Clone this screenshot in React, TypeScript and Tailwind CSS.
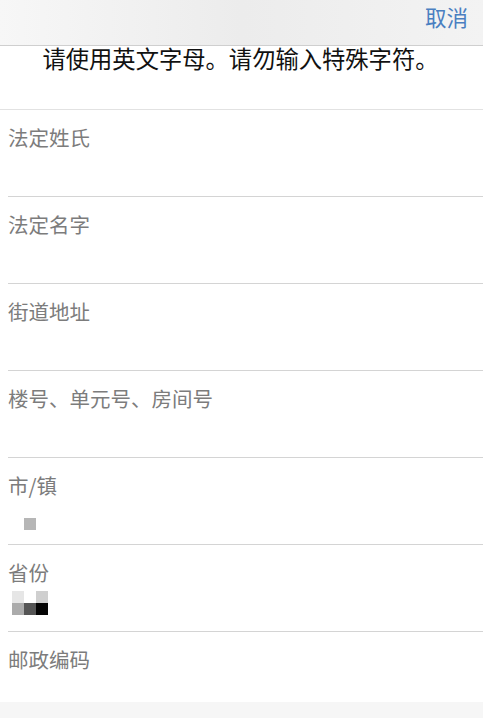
import React from "react";

const labels = ["法定姓氏", "法定名字", "街道地址", "楼号、单元号、房间号", "市/镇", "省份"];

function Px({ c }: { c: string }) {
  return <div className={`w-[12px] h-[12px] ${c}`} />;
}

export default function App() {
  return (
    <div className="w-[483px] h-[718px] overflow-hidden bg-white flex flex-col" style={{ fontFamily: '"Noto Sans CJK SC", "Noto Sans", sans-serif' }}>
      <div className="h-[46px] shrink-0 flex items-center justify-end pr-[15px] border-b border-[#cfcfcf] bg-gradient-to-r from-[#f7f7f7] via-[#ececec] to-[#f3f3f3]">
        <span className="text-[21.5px] leading-none text-[#4a7fc1] -mt-[12px]">取消</span>
      </div>
      <div className="h-[64px] shrink-0 flex justify-center border-b border-[#e2e2e2]">
        <span className="text-[23.3px] leading-[24px] text-[#111] -ml-[2px]">请使用英文字母。请勿输入特殊字符。</span>
      </div>
      <div className="flex-1 flex flex-col">
        {labels.map((l, i) => (
          <div key={l} className="h-[87px] shrink-0 relative">
            <div className="pl-[8px] pt-[13px] text-[20.5px] leading-[28px] text-[#7c7c7c]">{l}</div>
            {i === 4 && (
              <div className="absolute left-[24px] top-[60px]"><Px c="bg-[#b6b6b6]" /></div>
            )}
            {i === 5 && (
              <div className="absolute left-[12px] top-[46px] grid grid-cols-3">
                <Px c="bg-[#e6e6e6]" />
                <Px c="bg-white" />
                <Px c="bg-[#cfcfcf]" />
                <Px c="bg-[#ababab]" />
                <Px c="bg-[#555555]" />
                <Px c="bg-[#050505]" />
              </div>
            )}
            <div className="absolute left-[8px] right-0 bottom-0 h-px bg-[#d4d4d4]" />
          </div>
        ))}
        <div className="flex-1 relative">
          <div className="pl-[8px] pt-[13px] text-[20.5px] leading-[28px] text-[#7c7c7c]">邮政编码</div>
        </div>
      </div>
      <div className="h-[16px] shrink-0 bg-[#f6f6f6]" />
    </div>
  );
}
